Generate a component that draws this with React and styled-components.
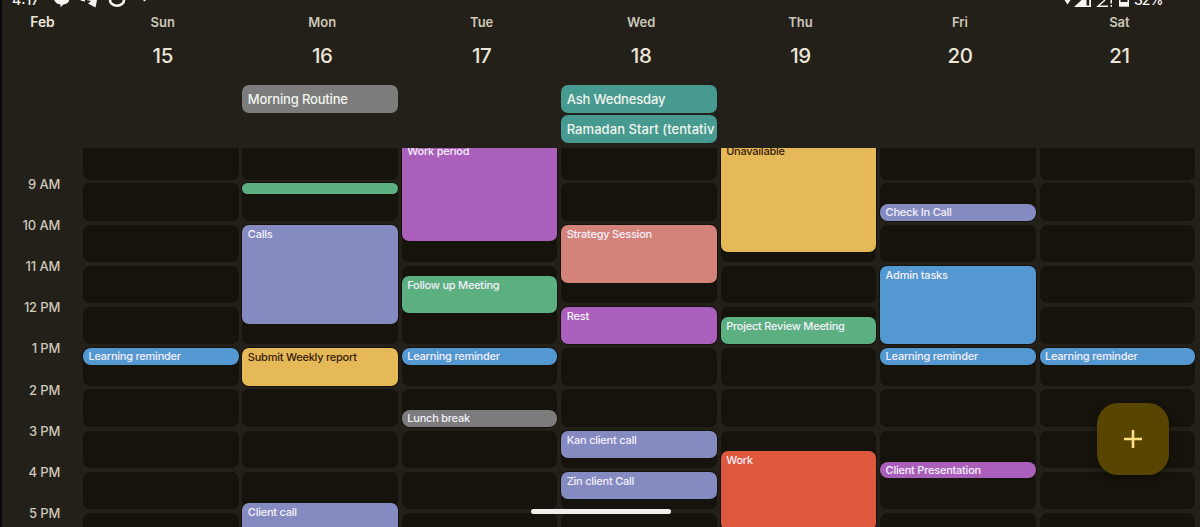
import React from 'react';
import styled, { createGlobalStyle } from 'styled-components';

const HOUR = 41.22;
const START_HOUR = 8;

const GlobalStyle = createGlobalStyle`
  * {
    box-sizing: border-box;
  }

  body {
    margin: 0;
    background: #23201a;
    font-family: Inter, Roboto, 'Liberation Sans', sans-serif;
    overflow: hidden;
  }
`;

// Styled components
const Screen = styled.div`
  position: relative;
  display: flex;
  flex-direction: column;
  width: 1200px;
  height: 527px;
  overflow: hidden;
  background: #23201a;
  border-left: 2px solid #090806;
`;

const StatusBar = styled.div`
  display: flex;
  justify-content: space-between;
  height: 8px;
  padding: 0 38px 0 10px;
  overflow: hidden;
  color: #f8f6f2;
`;

const StatusGroup = styled.div`
  display: flex;
  align-items: flex-end;
  height: 8px;
`;

const StatusText = styled.span`
  width: ${({ $width }) => $width}px;
  margin-bottom: 1px;
  font-size: 14px;
  font-weight: 500;
  line-height: 14px;
  letter-spacing: ${({ $spacing = 0 }) => $spacing}px;
  white-space: nowrap;
`;

const Header = styled.header`
  display: flex;
  height: 77px;
`;

const Month = styled.div`
  width: 81px;
  padding-top: 5px;
  text-align: center;
  font-size: 13.8px;
  font-weight: 600;
  line-height: 18px;
  color: #ebe5d6;
`;

const DayColumns = styled.div`
  display: grid;
  grid-template-columns: repeat(7, 155.6px);
  column-gap: 3.85px;
`;

const Day = styled.div`
  display: flex;
  flex-direction: column;
  align-items: center;
  padding: 5px 0 0 4px;
`;

const Weekday = styled.span`
  font-size: 13px;
  font-weight: 600;
  line-height: 18px;
  color: #cdc7b8;
`;

const DayNumber = styled.span`
  margin-top: 12px;
  font-size: 20.5px;
  font-weight: 550;
  line-height: 26px;
  letter-spacing: -0.4px;
  color: #ebe5d6;
`;

const AllDay = styled.section`
  display: flex;
  height: 63px;
  padding-left: 81px;
`;

const AllDayColumn = styled.div`
  display: flex;
  flex-direction: column;
  gap: 2.4px;
  min-width: 0;
`;

const AllDayEvent = styled.div`
  height: 28px;
  padding: 0 2px 0 5.4px;
  border-radius: 7px;
  overflow: hidden;
  white-space: nowrap;
  font-size: 13px;
  font-weight: 500;
  line-height: 28px;
  letter-spacing: ${({ $spacing = -0.16 }) => $spacing}px;
  color: #f1f4ee;
  background: ${({ $color }) => $color};
`;

const Timeline = styled.main`
  display: flex;
  height: 379px;
  overflow: hidden;
`;

const Hours = styled.div`
  width: 81px;
  padding: 15.6px 22.8px 0 0;
`;

const HourLabel = styled.div`
  height: ${HOUR}px;
  padding-top: 11px;
  text-align: right;
  white-space: nowrap;
  font-size: 13px;
  font-weight: 500;
  line-height: 18px;
  letter-spacing: -0.15px;
  color: #cdc7b8;
`;

const DayTrack = styled.div`
  position: relative;
  display: flex;
  flex-direction: column;
  gap: 3.8px;
  margin-top: -5.9px;
`;

const Slot = styled.div`
  flex: none;
  height: ${HOUR - 3.8}px;
  border-radius: 7px;
  background: #16130c;
`;

const Event = styled.div`
  position: absolute;
  left: 0;
  top: ${({ $start }) => ($start - START_HOUR) * HOUR}px;
  width: 100%;
  height: ${({ $hours }) => $hours * HOUR - 3.8}px;
  padding: ${({ $compact }) => ($compact ? '1px' : '2px')} 5.4px 0;
  border-radius: ${({ $compact }) => ($compact ? 8 : 7)}px;
  box-shadow: 0 0 0 1px #16130c;
  overflow: hidden;
  white-space: nowrap;
  font-size: 11px;
  font-weight: 500;
  line-height: 14px;
  letter-spacing: -0.23px;
  color: ${({ $dark }) => ($dark ? '#36200a' : '#f3effa')};
  background: ${({ $color }) => $color};
`;

const AddButton = styled.button`
  position: absolute;
  right: 31px;
  bottom: 52px;
  display: flex;
  align-items: center;
  justify-content: center;
  width: 72px;
  height: 72px;
  padding: 0;
  border: 0;
  border-radius: 21px;
  color: #ffdf84;
  background: #574500;
  box-shadow: 0 3px 8px rgba(0, 0, 0, 0.35);
`;

const HomeIndicator = styled.div`
  position: absolute;
  left: 529px;
  bottom: 13px;
  width: 140px;
  height: 5px;
  border-radius: 3px;
  background: #f2eeec;
`;

const colors = {
  lavender: '#858bc1',
  grape: '#aa60bb',
  green: '#5baf80',
  yellow: '#e5b957',
  blue: '#5398d0',
  salmon: '#d4837a',
  gray: '#7c7c7c',
  teal: '#479a90',
  red: '#de583d'
};

const days = [
  {
    name: 'Sun',
    date: 15,
    allDay: [],
    events: [{ title: 'Learning reminder', start: 13, hours: 0.5, color: 'blue' }]
  },
  {
    name: 'Mon',
    date: 16,
    allDay: [{ title: 'Morning Routine', color: 'gray' }],
    events: [
      { title: '', start: 9, hours: 0.34, color: 'green' },
      { title: 'Calls', start: 10, hours: 2.5, color: 'lavender' },
      { title: 'Submit Weekly report', start: 13, hours: 1, color: 'yellow', dark: true },
      { title: 'Client call', start: 16.75, hours: 1, color: 'lavender' }
    ]
  },
  {
    name: 'Tue',
    date: 17,
    allDay: [],
    events: [
      { title: 'Work period', start: 8, hours: 2.5, color: 'grape' },
      { title: 'Follow up Meeting', start: 11.25, hours: 1, color: 'green' },
      { title: 'Learning reminder', start: 13, hours: 0.5, color: 'blue' },
      { title: 'Lunch break', start: 14.5, hours: 0.5, color: 'gray' }
    ]
  },
  {
    name: 'Wed',
    date: 18,
    allDay: [
      { title: 'Ash Wednesday', color: 'teal' },
      { title: 'Ramadan Start (tentativ', color: 'teal', spacing: 0.06 }
    ],
    events: [
      { title: 'Strategy Session', start: 10, hours: 1.5, color: 'salmon' },
      { title: 'Rest', start: 12, hours: 1, color: 'grape' },
      { title: 'Kan client call', start: 15, hours: 0.75, color: 'lavender' },
      { title: 'Zin client Call', start: 16, hours: 0.75, color: 'lavender' }
    ]
  },
  {
    name: 'Thu',
    date: 19,
    allDay: [],
    events: [
      { title: 'Unavailable', start: 8, hours: 2.75, color: 'yellow', dark: true },
      { title: 'Project Review Meeting', start: 12.25, hours: 0.75, color: 'green' },
      { title: 'Work', start: 15.5, hours: 2, color: 'red' }
    ]
  },
  {
    name: 'Fri',
    date: 20,
    allDay: [],
    events: [
      { title: 'Check In Call', start: 9.5, hours: 0.5, color: 'lavender' },
      { title: 'Admin tasks', start: 11, hours: 2, color: 'blue' },
      { title: 'Learning reminder', start: 13, hours: 0.5, color: 'blue' },
      { title: 'Client Presentation', start: 15.75, hours: 0.5, color: 'grape' }
    ]
  },
  {
    name: 'Sat',
    date: 21,
    allDay: [],
    events: [{ title: 'Learning reminder', start: 13, hours: 0.5, color: 'blue' }]
  }
];

const hourLabels = ['9 AM', '10 AM', '11 AM', '12 PM', '1 PM', '2 PM', '3 PM', '4 PM', '5 PM'];
const slots = Array.from({ length: 10 }, (_, i) => START_HOUR + i);

const NotificationIcons = () => (
  <svg width="105" height="8" viewBox="0 0 105 8" fill="currentColor">
    <path d="M0 0H15V1Q13.500 4 9.500 4.500L6.500 7.200V4.500Q2 4 0 0Z" />
    <path d="M26 0H31V1.500L28 1ZM32 0H43L41.500 7.500L34 3.500L37 1Z" />
    <path d="M56 0A7 5.800 0 0 0 70 0" fill="none" stroke="currentColor" strokeWidth="2.600" />
    <circle cx="90.500" cy="0" r="1.200" />
  </svg>
);

const SignalIcons = () => (
  <svg width="70" height="8" viewBox="0 0 70 8" fill="currentColor">
    <path d="M0.500 0H6.500L3.500 4.500Z" />
    <path d="M10 7L17.500 0H27V7Z" />
    <path d="M22.500 0H25.200V5.500H22.500Z" fill="#23201a" />
    <path d="M41 0L34 6.200H44" fill="none" stroke="currentColor" strokeWidth="1.400" />
    <path d="M46.500 0H48V3.500H46.500ZM46.500 5H48V6.700H46.500Z" />
    <path d="M55 0H65V6.700H55Z" />
    <path d="M56.500 0H63.500V2H56.500Z" fill="#23201a" />
  </svg>
);

const PlusIcon = () => (
  <svg width="18" height="18" viewBox="0 0 18 18" fill="none" stroke="currentColor" strokeWidth="2.6">
    <path d="M9 0V18M0 9H18" />
  </svg>
);

const App = () => (
  <>
    <GlobalStyle />
    <Screen>
      <StatusBar>
        <StatusGroup>
          <StatusText $width={42}>4:17</StatusText>
          <NotificationIcons />
        </StatusGroup>
        <StatusGroup>
          <SignalIcons />
          <StatusText $width={28} $spacing={-1}>32%</StatusText>
        </StatusGroup>
      </StatusBar>

      <Header>
        <Month>Feb</Month>
        <DayColumns>
          {days.map((day) => (
            <Day key={day.date}>
              <Weekday>{day.name}</Weekday>
              <DayNumber>{day.date}</DayNumber>
            </Day>
          ))}
        </DayColumns>
      </Header>

      <AllDay>
        <DayColumns>
          {days.map((day) => (
            <AllDayColumn key={day.date}>
              {day.allDay.map((item) => (
                <AllDayEvent key={item.title} $color={colors[item.color]} $spacing={item.spacing}>
                  {item.title}
                </AllDayEvent>
              ))}
            </AllDayColumn>
          ))}
        </DayColumns>
      </AllDay>

      {/* Hourly grid, scrolled a little past 8 AM */}
      <Timeline>
        <Hours>
          {hourLabels.map((label) => (
            <HourLabel key={label}>{label}</HourLabel>
          ))}
        </Hours>
        <DayColumns>
          {days.map((day) => (
            <DayTrack key={day.date}>
              {slots.map((hour) => (
                <Slot key={hour} />
              ))}
              {day.events.map((event) => (
                <Event
                  key={event.start}
                  $start={event.start}
                  $hours={event.hours}
                  $compact={event.hours <= 0.5}
                  $color={colors[event.color]}
                  $dark={event.dark}
                >
                  {event.title}
                </Event>
              ))}
            </DayTrack>
          ))}
        </DayColumns>
      </Timeline>

      <AddButton aria-label="Create event">
        <PlusIcon />
      </AddButton>
      <HomeIndicator />
    </Screen>
  </>
);

export default App;
